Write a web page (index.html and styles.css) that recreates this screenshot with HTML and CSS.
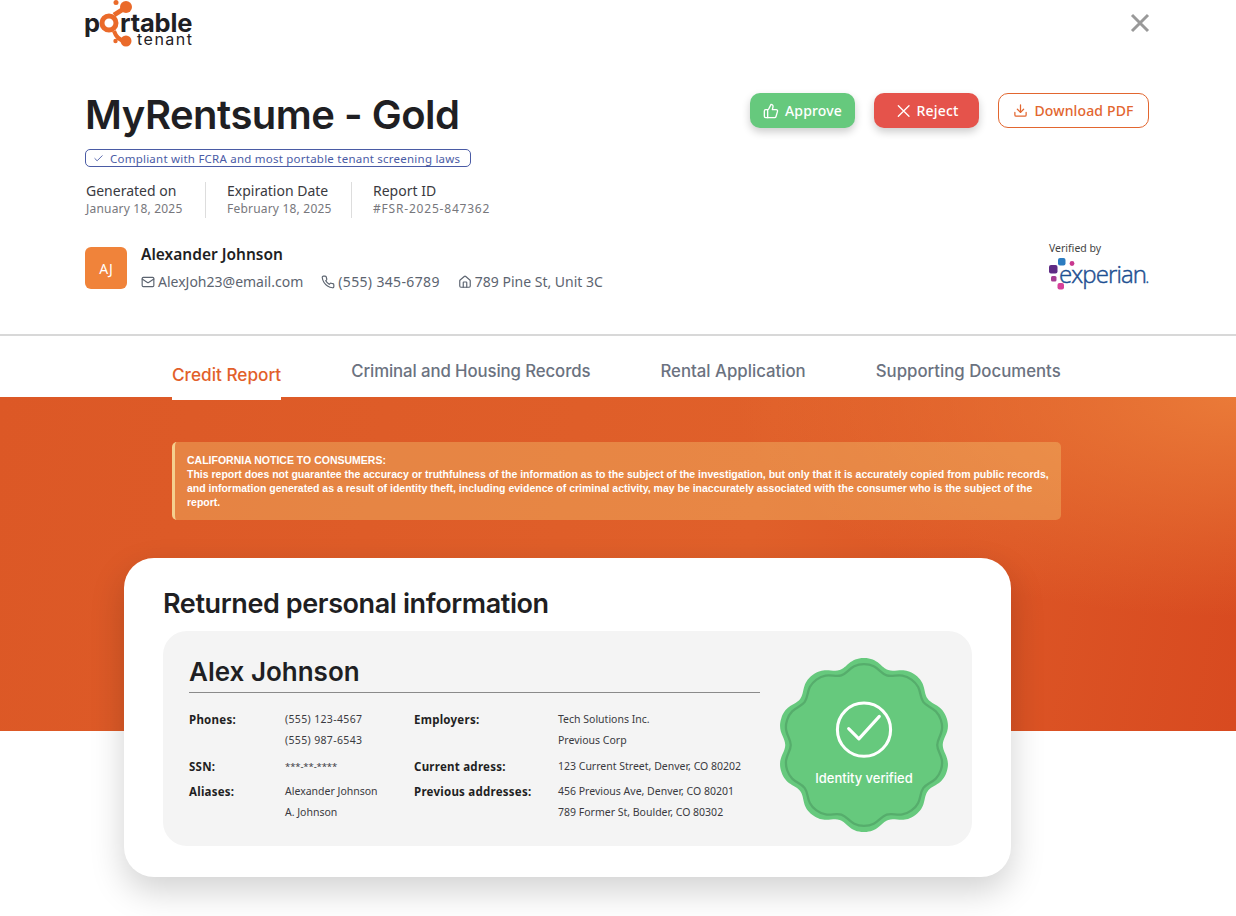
FILE: index.html
```html
<!DOCTYPE html>
<html lang="en">
<head>
  <meta charset="UTF-8" />
  <title>MyRentsume - Gold</title>
  <link rel="stylesheet" href="styles.css">
</head>
<body>
  <header class="head">
    <div class="topbar">
      <svg class="logo" width="110" height="48" viewBox="0 0 110 48">
        <g fill="none" stroke="#ea6a2a">
          <path d="M29 15 L40 8" stroke-width="5"/>
          <path d="M29 31 Q32 40 40 41" stroke-width="4"/>
        </g>
        <circle cx="24" cy="23" r="7" fill="none" stroke="#ea6a2a" stroke-width="5"/>
        <circle cx="41" cy="7" r="6" fill="#ea6a2a"/>
        <circle cx="31" cy="2.500" r="2.500" fill="#ea6a2a"/>
        <circle cx="41" cy="41" r="5.500" fill="#ea6a2a"/>
        <circle cx="30.500" cy="41" r="2.200" fill="#ea6a2a"/>
        <text class="logo-big" x="-1" y="32">p</text>
        <text class="logo-big" x="35" y="32">rtable</text>
        <text class="logo-small" x="52" y="45">tenant</text>
      </svg>
      <svg class="close" width="20" height="20" viewBox="0 0 20 20"><path d="M2 2 L18 18 M18 2 L2 18"/></svg>
    </div>

    <div class="title-row">
      <h1>MyRentsume - Gold</h1>
      <div class="actions">
        <a class="btn btn-green">
          <svg class="ico" width="16" height="16" viewBox="0 0 24 24"><path d="M7 10v12"/><path d="M15 5.880 14 10h5.830a2 2 0 0 1 1.920 2.560l-2.330 8A2 2 0 0 1 17.500 22H4a2 2 0 0 1-2-2v-8a2 2 0 0 1 2-2h2.760a2 2 0 0 0 1.790-1.110L12 2a3.130 3.130 0 0 1 3 3.880Z"/></svg>
          Approve
        </a>
        <a class="btn btn-red">
          <svg class="ico" width="16" height="16" viewBox="0 0 24 24"><path d="M5 4 L21 20 M21 4 L5 20"/></svg>
          Reject
        </a>
        <a class="btn btn-line">
          <svg class="ico" width="15" height="15" viewBox="0 0 24 24"><path d="M21 15v4a2 2 0 0 1-2 2H5a2 2 0 0 1-2-2v-4"/><path d="M7 10l5 5 5-5"/><path d="M12 15V3"/></svg>
          Download PDF
        </a>
      </div>
    </div>

    <p class="compliant">
      <svg class="ico" width="11" height="11" viewBox="0 0 24 24"><path d="M20 6 9 17l-5-5"/></svg>
      Compliant with FCRA and most portable tenant screening laws
    </p>

    <div class="meta">
      <div class="meta-item">
        <div class="meta-label">Generated on</div>
        <div class="meta-value">January 18, 2025</div>
      </div>
      <div class="meta-item">
        <div class="meta-label">Expiration Date</div>
        <div class="meta-value">February 18, 2025</div>
      </div>
      <div class="meta-item">
        <div class="meta-label">Report ID</div>
        <div class="meta-value meta-id">#FSR-2025-847362</div>
      </div>
    </div>

    <div class="user-row">
      <div class="user">
        <div class="avatar">AJ</div>
        <div>
          <div class="user-name">Alexander Johnson</div>
          <div class="contacts">
            <span class="contact">
              <svg class="ico" width="14" height="14" viewBox="0 0 24 24"><rect x="2" y="4" width="20" height="16" rx="2"/><path d="m22 7-8.970 5.700a1.940 1.940 0 0 1-2.060 0L2 7"/></svg>
              AlexJoh23@email.com
            </span>
            <span class="contact contact-phone">
              <svg class="ico" width="14" height="14" viewBox="0 0 24 24"><path d="M22 16.920v3a2 2 0 0 1-2.180 2 19.790 19.790 0 0 1-8.630-3.070 19.500 19.500 0 0 1-6-6 19.790 19.790 0 0 1-3.070-8.670A2 2 0 0 1 4.110 2h3a2 2 0 0 1 2 1.720 12.840 12.840 0 0 0 .7 2.810 2 2 0 0 1-.45 2.110L8.090 9.910a16 16 0 0 0 6 6l1.270-1.270a2 2 0 0 1 2.110-.45 12.840 12.840 0 0 0 2.810.7A2 2 0 0 1 22 16.920z"/></svg>
              (555) 345-6789
            </span>
            <span class="contact">
              <svg class="ico" width="14" height="14" viewBox="0 0 24 24"><path d="M15 21v-8a1 1 0 0 0-1-1h-4a1 1 0 0 0-1 1v8"/><path d="M3 10a2 2 0 0 1 .709-1.528l7-5.999a2 2 0 0 1 2.582 0l7 5.999A2 2 0 0 1 21 10v9a2 2 0 0 1-2 2H5a2 2 0 0 1-2-2z"/></svg>
              789 Pine St, Unit 3C
            </span>
          </div>
        </div>
      </div>
      <div class="verified">
        <div class="verified-label">Verified by</div>
        <svg class="experian" width="100" height="36" viewBox="0 0 100 36">
          <rect x="9" y="1" width="7.500" height="7.500" rx="2" fill="#2c7cc0"/>
          <circle cx="23" cy="6.500" r="2.400" fill="#c8388f"/>
          <rect x="0" y="8" width="8.500" height="8.500" rx="2" fill="#5f2b84"/>
          <rect x="2" y="19" width="5.500" height="5.500" rx="1.500" fill="#a63c92"/>
          <rect x="8.500" y="26" width="6.500" height="6.500" rx="2" fill="#d8409a"/>
          <text class="experian-text" x="10" y="26">experian<tspan class="experian-dot">.</tspan></text>
        </svg>
      </div>
    </div>
  </header>

  <nav class="tabs">
    <a class="tab tab-active">Credit Report</a>
    <a class="tab tab-long">Criminal and Housing Records</a>
    <a class="tab">Rental Application</a>
    <a class="tab">Supporting Documents</a>
  </nav>

  <section class="band">
    <div class="notice">
      <div>CALIFORNIA NOTICE TO CONSUMERS:</div>
      <div>This report does not guarantee the accuracy or truthfulness of the information as to the subject of the investigation, but only that it is accurately copied from public records, and information generated as a result of identity theft, including evidence of criminal activity, may be inaccurately associated with the consumer who is the subject of the report.</div>
    </div>

    <div class="card">
      <h2>Returned personal information</h2>
      <div class="person">
        <div class="person-main">
          <h3>Alex Johnson</h3>
          <div class="details">
            <b>Phones:</b>
            <div class="phones">(555) 123-4567<br>(555) 987-6543</div>
            <b>Employers:</b>
            <div>Tech Solutions Inc.<br>Previous Corp</div>
            <b>SSN:</b>
            <div class="ssn">***-**-****</div>
            <b>Current adress:</b>
            <div>123 Current Street, Denver, CO 80202</div>
            <b>Aliases:</b>
            <div>Alexander Johnson<br>A. Johnson</div>
            <b>Previous addresses:</b>
            <div>456 Previous Ave, Denver, CO 80201<br>789 Former St, Boulder, CO 80302</div>
          </div>
        </div>
        <div class="seal">
          <svg width="176" height="180" viewBox="-86 -88 172 176">
            <defs>
              <path id="wave" d="M0,-85 C14,-85 16.18,-75.7 23.79,-73.23 S38.63,-77 49.96,-68.77 S57.59,-51.73 62.29,-45.26 S76.51,-39.58 80.84,-26.27 S77,-8 77,0 S85.17,12.96 80.84,26.27 S66.99,38.79 62.29,45.26 S61.29,60.54 49.96,68.77 S31.4,70.76 23.79,73.23 S14,85 0,85 S-16.18,75.7 -23.79,73.23 S-38.63,77 -49.96,68.77 S-57.59,51.73 -62.29,45.26 S-76.51,39.58 -80.84,26.27 S-77,8 -77,0 S-85.17,-12.96 -80.84,-26.27 S-66.99,-38.79 -62.29,-45.26 S-61.29,-60.54 -49.96,-68.77 S-31.4,-70.76 -23.79,-73.23 S-14,-85 0,-85 Z"/>
            </defs>
            <use href="#wave" fill="#66c97d"/>
            <use href="#wave" class="seal-ring" transform="scale(.93)"/>
            <circle cx="0" cy="-15" r="26" class="seal-mark"/>
            <path d="M-15,-16 L-5,-6 L15,-28" class="seal-mark"/>
            <text class="seal-text" x="0" y="37">Identity verified</text>
          </svg>
        </div>
      </div>
    </div>
  </section>
</body>
</html>
```

FILE: styles.css
```css
* {
  box-sizing: border-box;
}
html, body {
  height: 916px;
  overflow: hidden;
}
body {
  margin: 0;
  background-color: #fff;
  color: #1f1f23;
  font-family: 'Noto Sans', sans-serif;
}
h1, h2, h3, p {
  margin: 0;
}
.ico {
  fill: none;
  stroke: currentColor;
  stroke-width: 2;
  stroke-linecap: round;
  stroke-linejoin: round;
  flex: none;
}

/* header */
.head {
  height: 336px;
  padding: 0 87px 0 85px;
  border-bottom: 2px solid #d8d8d8;
}
.topbar {
  height: 93px;
  display: flex;
  justify-content: space-between;
  align-items: flex-start;
}
.logo-big {
  font-family: 'Inter', sans-serif;
  font-size: 25.5px;
  font-weight: 700;
  letter-spacing: -0.2px;
  fill: #1f2024;
}
.logo-small {
  font-family: 'Inter', sans-serif;
  font-size: 16px;
  font-weight: 400;
  letter-spacing: 1.5px;
  fill: #1f2024;
}
.close {
  margin-top: 13px;
  margin-right: -1px;
}
.close path {
  fill: none;
  stroke: #999;
  stroke-width: 3;
}
.title-row {
  display: flex;
  justify-content: space-between;
  align-items: flex-start;
}
h1 {
  font-family: 'Inter', sans-serif;
  font-size: 40px;
  font-weight: 600;
  line-height: 44px;
  letter-spacing: -0.5px;
}
.actions {
  display: flex;
  gap: 19px;
}
.btn {
  height: 35px;
  border-radius: 10px;
  display: flex;
  align-items: center;
  justify-content: center;
  gap: 6px;
  font-size: 14px;
  font-weight: 500;
  letter-spacing: 0.15px;
  white-space: nowrap;
}
.btn-green {
  width: 105px;
  background-color: #66c97d;
  color: #fff;
  box-shadow: 0 4px 8px rgba(0, 0, 0, 0.2);
}
.btn-red {
  width: 105px;
  background-color: #e5534b;
  color: #fff;
  box-shadow: 0 4px 8px rgba(0, 0, 0, 0.2);
}
.btn-line {
  width: 151px;
  border: 1px solid #e2662f;
  color: #e2662f;
}
.compliant {
  width: 386px;
  height: 18px;
  margin-top: 12px;
  padding-left: 7px;
  border: 1px solid #4a5ba5;
  border-radius: 5px;
  display: flex;
  align-items: center;
  gap: 6px;
  font-size: 11.5px;
  letter-spacing: 0.23px;
  color: #4a5ba5;
}
.meta {
  margin-top: 15px;
  display: flex;
}
.meta-item {
  height: 36px;
  line-height: 18px;
  padding-left: 21px;
  border-left: 1px solid #ddd;
}
.meta-item:nth-child(1) {
  width: 120px;
  padding-left: 1px;
  border-left: 0;
}
.meta-item:nth-child(2) {
  width: 146px;
}
.meta-label {
  font-size: 14px;
  color: #3a3a3f;
}
.meta-value {
  font-size: 12px;
  letter-spacing: 0.2px;
  color: #77777c;
}
.meta-id {
  letter-spacing: 0.8px;
}
.user-row {
  margin-top: 25px;
  display: flex;
  justify-content: space-between;
  align-items: center;
}
.user {
  display: flex;
  align-items: center;
  gap: 14px;
}
.avatar {
  width: 42px;
  height: 42px;
  border-radius: 6px;
  background-color: #f0833a;
  color: #fff;
  font-size: 14px;
  display: flex;
  align-items: center;
  justify-content: center;
}
.user-name {
  font-size: 15.5px;
  font-weight: 600;
  line-height: 18px;
}
.contacts {
  margin-top: 10px;
  display: flex;
  gap: 18px;
  line-height: 18px;
  font-size: 14px;
  color: #5c6470;
}
.contact {
  display: flex;
  align-items: center;
  gap: 3px;
}
.contact-phone {
  letter-spacing: 0.35px;
}
.verified {
  width: 100px;
  margin-top: -2px;
}
.verified-label {
  font-size: 10.5px;
  line-height: 14px;
  color: #444;
}
.experian {
  display: block;
  margin-top: 2px;
}
.experian-text {
  font-family: 'Open Sans', sans-serif;
  font-size: 24px;
  font-weight: 300;
  letter-spacing: -0.9px;
  fill: #1d4f91;
  stroke: #1d4f91;
  stroke-width: 0.45;
}
.experian-dot {
  font-size: 10px;
  font-weight: 400;
}

/* tabs */
.tabs {
  height: 61px;
  padding-left: 172px;
  display: flex;
  gap: 70px;
  background-color: #fff;
}
.tab {
  height: 61px;
  padding-top: 24px;
  font-family: 'Inter', sans-serif;
  font-size: 16.8px;
  font-weight: 500;
  line-height: 22px;
  color: #6b7280;
}
.tab-long {
  letter-spacing: -0.1px;
}
.tab-active {
  height: 64px;
  padding-top: 28px;
  font-size: 17.2px;
  color: #e2602a;
  background-color: #fff;
  position: relative;
  z-index: 1;
}

/* orange area */
.band {
  height: 334px;
  padding-top: 45px;
  background:
    radial-gradient(500px 220px at 100% 0%, #ea7a38 0%, rgba(234, 122, 56, 0) 100%),
    linear-gradient(100deg, #dc5826 0%, #e0602a 60%, #d84a20 100%);
}
.notice {
  width: 889px;
  height: 78px;
  margin-left: 172px;
  padding: 11px 10px 0 12px;
  border-left: 3px solid #f5cf8e;
  border-radius: 5px;
  background-color: rgba(245, 210, 120, 0.35);
  font-family: 'Liberation Sans', sans-serif;
  font-size: 10.5px;
  font-weight: 700;
  line-height: 14px;
  color: #fff;
}
.card {
  width: 887px;
  height: 319px;
  margin: 38px 0 0 124px;
  padding: 27px 39px 0;
  border-radius: 30px;
  background-color: #fff;
  box-shadow: 0 14px 34px rgba(0, 0, 0, 0.18);
}
h2 {
  font-family: 'Inter', sans-serif;
  font-size: 27px;
  font-weight: 600;
  line-height: 38px;
  letter-spacing: -0.4px;
}
.person {
  height: 215px;
  margin-top: 8px;
  padding: 22px 22px 0 26px;
  border-radius: 24px;
  background-color: #f4f4f4;
  display: flex;
  justify-content: space-between;
}
.person-main {
  width: 571px;
}
h3 {
  font-family: 'Inter', sans-serif;
  font-size: 26px;
  font-weight: 600;
  line-height: 38px;
  padding-bottom: 1px;
  border-bottom: 1.5px solid #8a8a8a;
}
.details {
  margin-top: 16px;
  display: grid;
  grid-template-columns: 96px 129px 144px 1fr;
  row-gap: 4.5px;
  font-size: 10.5px;
  line-height: 21px;
  color: #3a3a3f;
}
.details b {
  font-size: 11.5px;
  font-weight: 700;
  letter-spacing: 0.25px;
  color: #1f1f23;
}
.phones {
  letter-spacing: 0.35px;
}
.details .ssn {
  font-size: 9.5px;
  letter-spacing: -0.1px;
}
.seal {
  margin-top: 2px;
  margin-right: -2px;
}
.seal-ring {
  fill: none;
  stroke: #56ad6c;
  stroke-width: 2.4;
}
.seal-mark {
  fill: none;
  stroke: #fff;
  stroke-width: 3;
  stroke-linecap: round;
  stroke-linejoin: round;
}
.seal-text {
  font-family: 'Inter', sans-serif;
  font-size: 12.7px;
  font-weight: 500;
  text-anchor: middle;
  fill: #fff;
}
```
